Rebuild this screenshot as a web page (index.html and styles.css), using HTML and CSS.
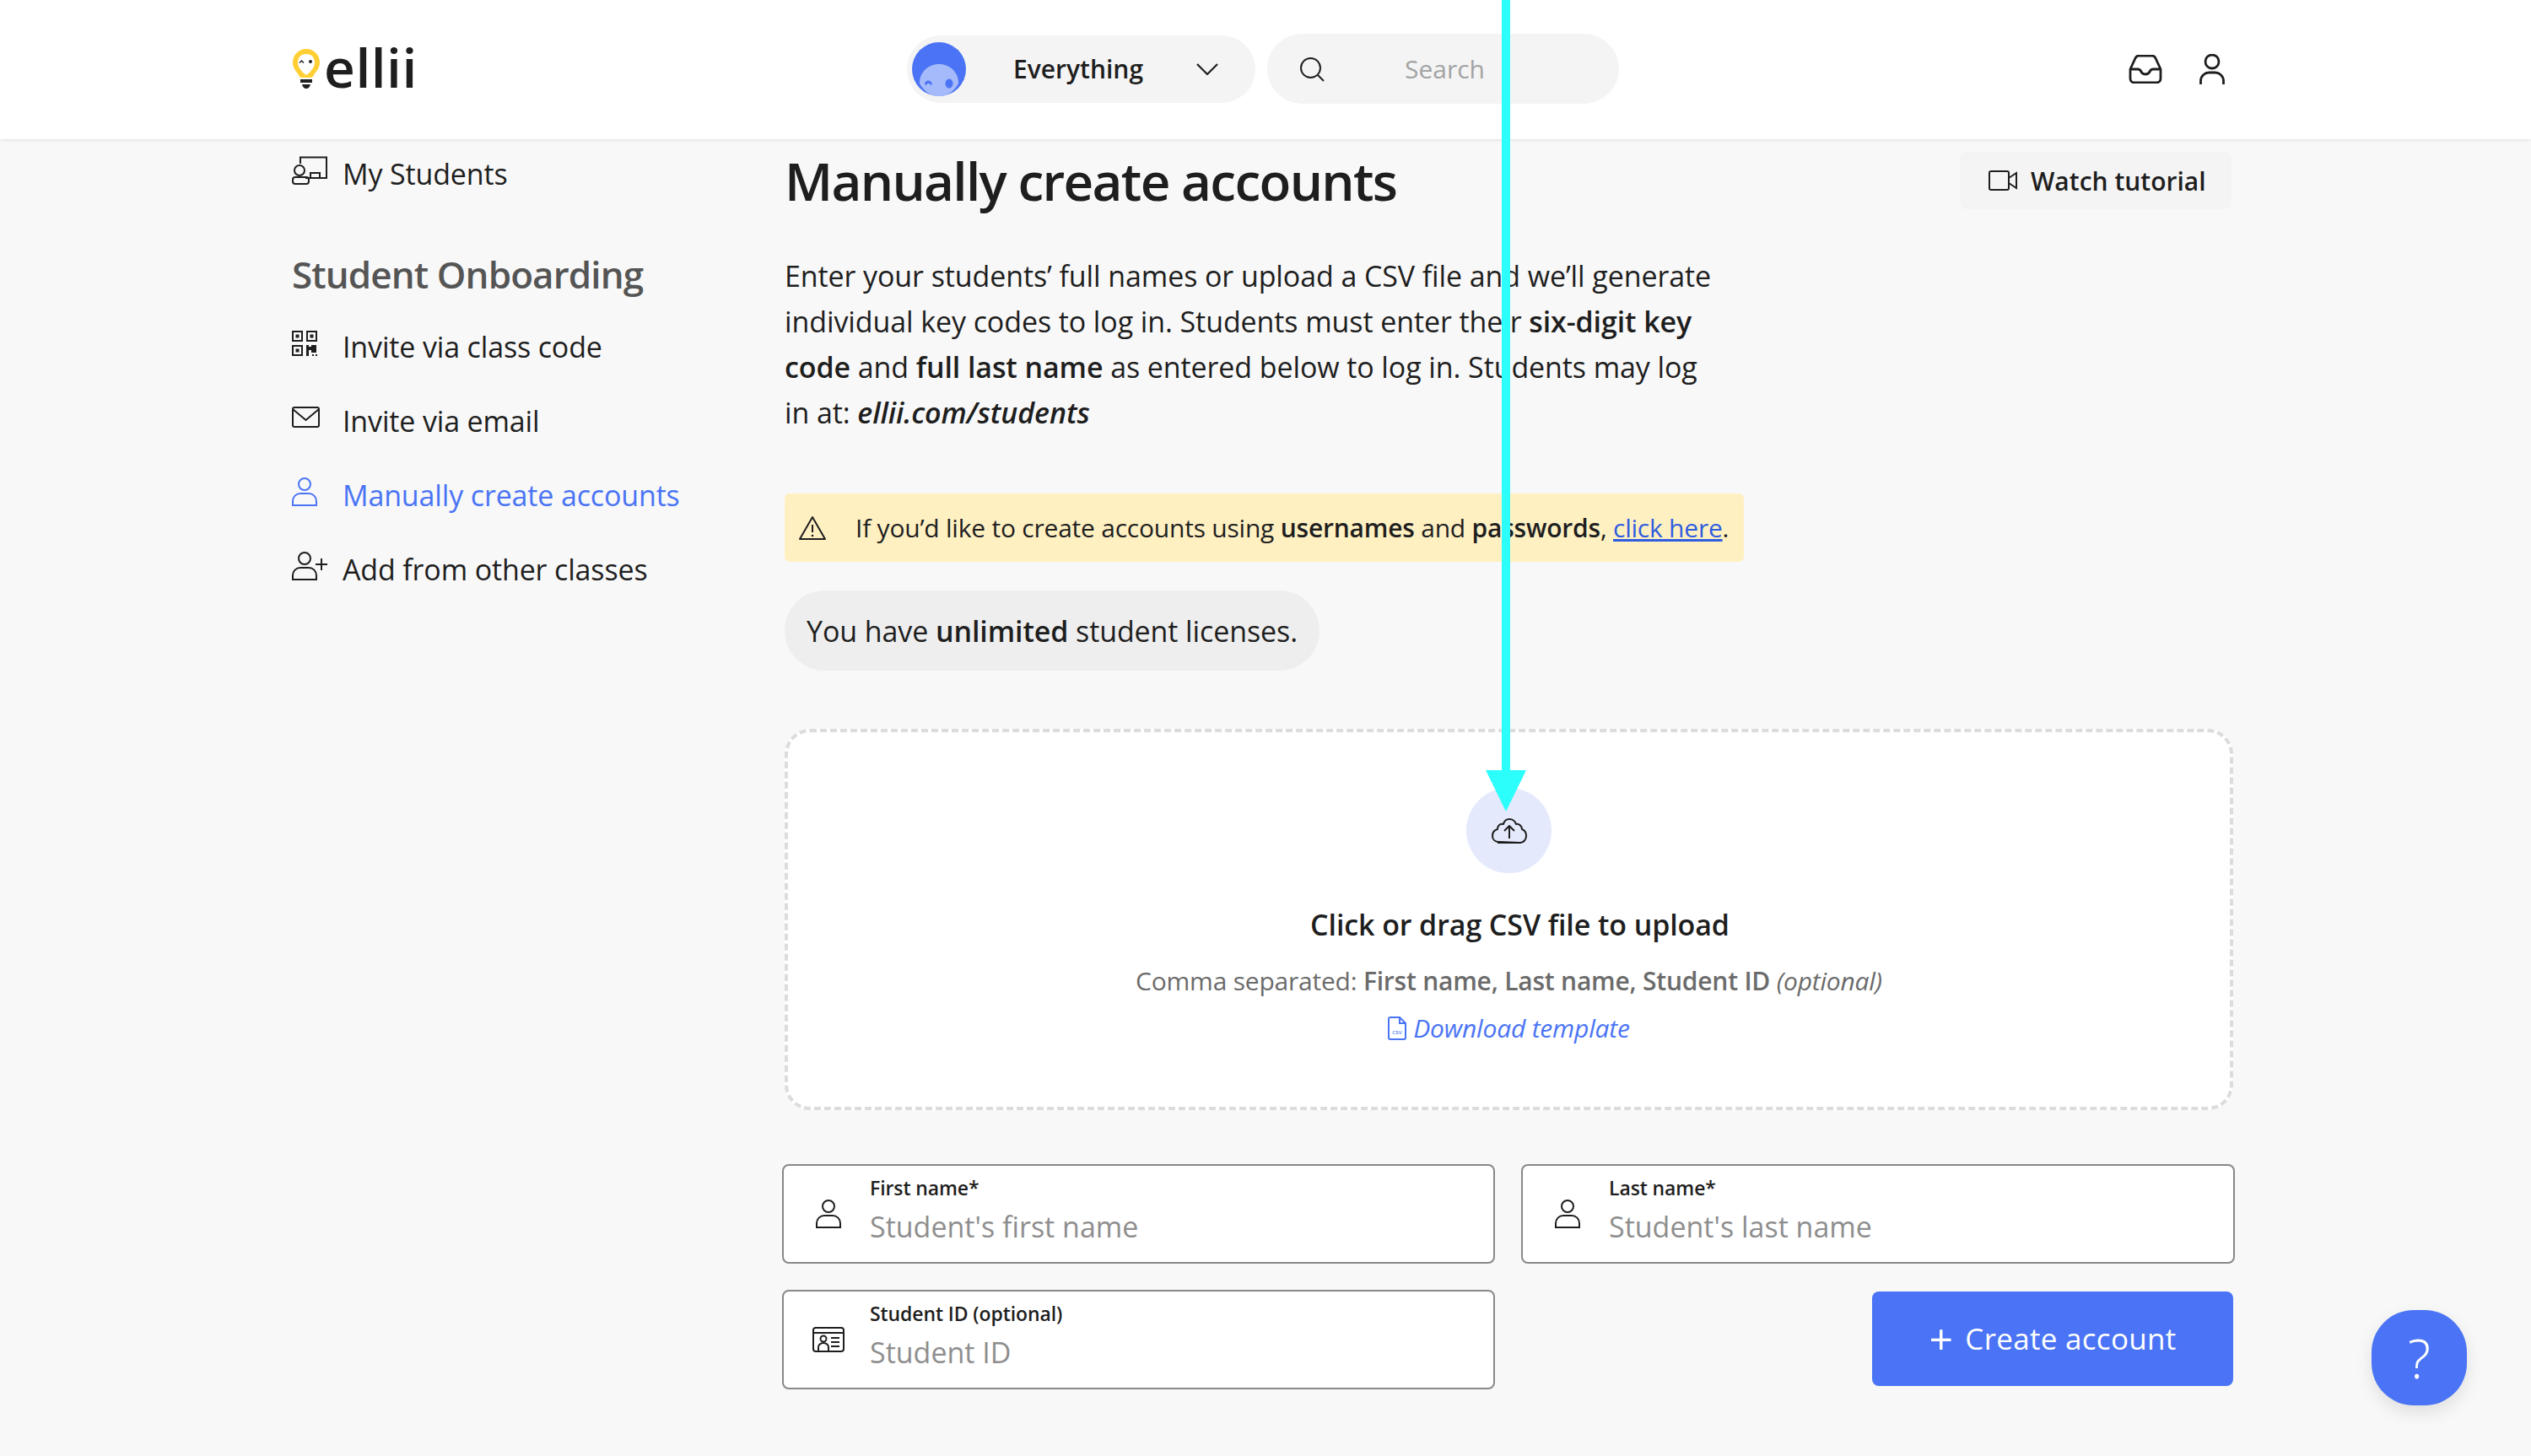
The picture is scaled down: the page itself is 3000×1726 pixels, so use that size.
FILE: index.html
```html
<!DOCTYPE html>
<html lang="en">
<head>
<meta charset="utf-8">
<title>Manually create accounts</title>
<link rel="stylesheet" href="styles.css">
</head>
<body>
<header class="topbar">
  <div class="logo">
    <svg class="bulb" viewBox="0 0 34 50" width="34" height="50">
      <path d="M17 1C8 1 1 8 1 17c0 7 4 10 7 15 1 2 2 3 3 3h12c1 0 2-1 3-3 3-5 7-8 7-15C33 8 26 1 17 1z" fill="#ffcf33"/>
      <path d="M17 7C11 7 7 11 7 17c0 5 3 8 6 12l4 3 4-3c3-4 6-7 6-12 0-6-4-10-10-10z" fill="#fff"/>
      <path d="M9 17.500l2.500-2.500 2.500 2.500" fill="none" stroke="#222" stroke-width="1.500"/>
      <circle cx="22" cy="16" r="2" fill="#222"/>
      <rect x="10" y="37" width="14" height="4" fill="#222"/>
      <path d="M12 43h10c-1 4-3 5-5 5s-4-1-5-5z" fill="#222"/>
    </svg>
    <span class="wordmark">ellii</span>
  </div>
  <div class="top-center">
    <div class="selector">
      <svg class="avatar" viewBox="0 0 64 64" width="64" height="64">
        <circle cx="32" cy="32" r="32" fill="#4a74f5"/>
        <path d="M32 26c13 0 23 10 23 22v1C50 58 42 64 32 64S14 58 9 49v-1c0-12 10-22 23-22z" fill="#a5bafa"/>
        <path d="M15 50c0-6 8-6 9 0l-2 1c-1-3-4-3-5 0z" fill="#4a74f5"/>
        <ellipse cx="44" cy="49" rx="4.500" ry="5.500" fill="#4a74f5"/>
      </svg>
      <span class="selector-label">Everything</span>
      <svg class="chevron" viewBox="0 0 26 14" width="26" height="14"><path d="M1 1l12 12L25 1" fill="none" stroke="#1e1e1e" stroke-width="2.200"/></svg>
    </div>
    <div class="search">
      <svg viewBox="0 0 30 30" width="30" height="30"><circle cx="13.500" cy="13.500" r="11.500" fill="none" stroke="#1e1e1e" stroke-width="2"/><path d="M22 22l7 7" stroke="#1e1e1e" stroke-width="2"/></svg>
      <span class="search-text">Search</span>
    </div>
  </div>
  <div class="top-actions">
    <svg viewBox="0 0 40 34" width="40" height="34"><path d="M2 17L8 4c1-2 2-3 4-3h16c2 0 3 1 4 3l6 13v11c0 3-2 5-5 5H7c-3 0-5-2-5-5z M2 17h9c2 0 3 1 4 3 1 2 3 3 5 3s4-1 5-3c1-2 2-3 4-3h9" fill="none" stroke="#1e1e1e" stroke-width="2.800" stroke-linejoin="round"/></svg>
    <svg viewBox="0 0 30 36" width="30" height="36"><circle cx="15" cy="9" r="8" fill="none" stroke="#1e1e1e" stroke-width="2.800"/><path d="M1.500 36v-4c0-6 5-10 10-10h7c5 0 10 4 10 10v4" fill="none" stroke="#1e1e1e" stroke-width="2.800"/></svg>
  </div>
</header>

<div class="page">
  <aside class="sidebar">
    <a class="nav-item nav-first">
      <svg viewBox="0 0 42 34" width="42" height="34"><g fill="none" stroke="#1e1e1e" stroke-width="2"><path d="M10 9V1.500h31V26H16"/><circle cx="9" cy="17" r="6"/><rect x="1" y="25" width="19" height="8" rx="3"/><path d="M22 26v-6h11v6"/></g></svg>
      <span>My Students</span>
    </a>
    <h2 class="side-title">Student Onboarding</h2>
    <a class="nav-item">
      <svg viewBox="0 0 30 30" width="30" height="30"><g fill="none" stroke="#1e1e1e" stroke-width="2"><rect x="1" y="1" width="11" height="11"/><rect x="18" y="1" width="11" height="11"/><rect x="1" y="18" width="11" height="11"/></g><g fill="#1e1e1e"><rect x="4.500" y="4.500" width="4" height="4"/><rect x="21.500" y="4.500" width="4" height="4"/><rect x="4.500" y="21.500" width="4" height="4"/><path d="M17 17h3v2h3v-2h6v9h-6v-3h-3v7h-3z"/><rect x="24" y="28" width="2" height="2"/><rect x="28" y="28" width="2" height="2"/></g></svg>
      <span>Invite via class code</span>
    </a>
    <a class="nav-item">
      <svg viewBox="0 0 33 26" width="33" height="26"><g fill="none" stroke="#1e1e1e" stroke-width="2"><rect x="1" y="1" width="31" height="23" rx="2"/><path d="M1 3l15.500 13L32 3"/></g></svg>
      <span>Invite via email</span>
    </a>
    <a class="nav-item active">
      <svg viewBox="0 0 30 34" width="30" height="34"><g fill="none" stroke="#4a74f5" stroke-width="2"><circle cx="15" cy="8" r="7"/><path d="M10 19h10c5 0 9 4 9 9v5H1v-5c0-5 4-9 9-9z"/></g></svg>
      <span>Manually create accounts</span>
    </a>
    <a class="nav-item">
      <svg viewBox="0 0 42 34" width="42" height="34"><g fill="none" stroke="#1e1e1e" stroke-width="2"><circle cx="15" cy="8" r="7"/><path d="M10 19h10c5 0 9 4 9 9v5H1v-5c0-5 4-9 9-9z"/><path d="M35 8v14M28 15h14"/></g></svg>
      <span>Add from other classes</span>
    </a>
  </aside>

  <main class="main">
    <div class="title-row">
      <h1>Manually create accounts</h1>
      <button class="tutorial">
        <svg viewBox="0 0 34 24" width="34" height="24"><g fill="none" stroke="#1e1e1e" stroke-width="2"><rect x="1" y="1" width="23" height="22" rx="2"/><path d="M24 9l9-6v18l-9-6"/></g></svg>
        <span>Watch tutorial</span>
      </button>
    </div>
    <p class="intro">Enter your students’ full names or upload a CSV file and we’ll generate individual key codes to log in. Students must enter their <b>six-digit key code</b> and <b>full last name</b> as entered below to log in. Students may log in at: <b><i>ellii.com/students</i></b></p>
    <div class="notice">
      <svg viewBox="0 0 34 30" width="34" height="30"><g fill="none" stroke="#1e1e1e" stroke-width="2" stroke-linejoin="round"><path d="M17 2L2 28h30z"/><path d="M17 11v9"/></g><circle cx="17" cy="24" r="1.300" fill="#1e1e1e"/></svg>
      <span>If you’d like to create accounts using <b>usernames</b> and <b>passwords</b>, <a class="notice-link">click here</a>.</span>
    </div>
    <div class="license"><span>You have <b>unlimited</b> student licenses.</span></div>
    <section class="dropzone">
      <div class="upload-circle">
        <svg viewBox="0 0 42 30" width="42" height="30"><g fill="none" stroke="#1e1e1e" stroke-width="2" stroke-linejoin="round"><path d="M9 28C4 28 1 25 1 21c0-4 2-7 6-8 0-5 4-7 7-6 1-4 4-6 7-6 4 0 7 3 8 6 3-1 7 2 7 6 3 1 5 4 5 8 0 4-3 8-7 8z"/><path d="M21 24V9M15 15l6-6 6 6"/></g><path d="M7 29h28" stroke="#1e1e1e" stroke-width="2"/></svg>
      </div>
      <div class="drop-title">Click or drag CSV file to upload</div>
      <div class="drop-sub">Comma separated: <b>First name, Last name, Student ID</b> <i>(optional)</i></div>
      <a class="drop-link">
        <svg viewBox="0 0 22 28" width="22" height="28"><path d="M1 3a2 2 0 0 1 2-2h11l7 7v17a2 2 0 0 1-2 2H3a2 2 0 0 1-2-2z M14 1v7h7" fill="none" stroke="#4a74f5" stroke-width="2"/><text class="csv-mark" x="11" y="21" text-anchor="middle">csv</text></svg>
        <i>Download template</i>
      </a>
    </section>
    <div class="form">
      <label class="field">
        <svg viewBox="0 0 30 34" width="30" height="34"><g fill="none" stroke="#1e1e1e" stroke-width="2"><circle cx="15" cy="8" r="7"/><path d="M10 19h10c5 0 9 4 9 9v5H1v-5c0-5 4-9 9-9z"/></g></svg>
        <span class="field-text"><span class="field-label">First name*</span><span class="field-ph">Student's first name</span></span>
      </label>
      <label class="field">
        <svg viewBox="0 0 30 34" width="30" height="34"><g fill="none" stroke="#1e1e1e" stroke-width="2"><circle cx="15" cy="8" r="7"/><path d="M10 19h10c5 0 9 4 9 9v5H1v-5c0-5 4-9 9-9z"/></g></svg>
        <span class="field-text"><span class="field-label">Last name*</span><span class="field-ph">Student's last name</span></span>
      </label>
      <label class="field">
        <svg viewBox="0 0 38 30" width="38" height="30"><g fill="none" stroke="#1e1e1e" stroke-width="2"><rect x="1" y="1" width="36" height="28" rx="3"/><path d="M1 7h36"/><circle cx="13" cy="14" r="3.500"/><path d="M7 28v-4c0-3 3-5 6-5s6 2 6 5v4"/><path d="M22 13h10M22 18h10M22 23h10"/></g></svg>
        <span class="field-text"><span class="field-label">Student ID (optional)</span><span class="field-ph">Student ID</span></span>
      </label>
      <div class="form-action">
        <button class="create"><span class="plus">+</span><span>Create account</span></button>
      </div>
    </div>
  </main>
</div>

<div class="help">?</div>

<svg class="annotation" viewBox="0 0 48 962" width="48" height="962">
  <rect x="19" y="0" width="10" height="915" fill="#2cfffb"/>
  <path d="M0 913h48L24 962z" fill="#2cfffb"/>
</svg>
</body>
</html>
```
FILE: styles.css
```css
* { box-sizing: border-box; }
html, body { margin: 0; padding: 0; }
body {
  width: 3000px;
  height: 1726px;
  overflow: hidden;
  position: relative;
  background: #f8f8f8;
  color: #1e1e1e;
  font-family: "Open Sans", "Liberation Sans", sans-serif;
}
b { font-weight: 600; }

.topbar {
  height: 165px;
  background: #fff;
  box-shadow: 0 1px 4px rgba(0,0,0,.1);
  display: flex;
  align-items: center;
  padding: 0 363px 2px 346px;
  position: relative;
}
.logo { display: flex; align-items: center; width: 729px; gap: 4px; }
.bulb { flex: none; }
.wordmark { font-size: 64px; font-weight: 600; line-height: 50px; margin-top: -4px; letter-spacing: 0.5px; }
.top-center { display: flex; align-items: center; gap: 14px; flex: 1; }
.selector {
  width: 413px; height: 80px; border-radius: 40px; background: #f4f4f4;
  display: flex; align-items: center; padding-left: 6px;
}
.selector-label { font-size: 30px; font-weight: 600; margin-left: 56px; width: 217px; }
.search {
  width: 417px; height: 83px; border-radius: 42px; background: #f4f4f4;
  display: flex; align-items: center; padding-left: 38px;
}
.search-text { font-size: 30px; color: #a3a3a3; margin-left: 95px; }
.top-actions { display: flex; align-items: center; gap: 44px; }

.page { display: flex; padding: 20px 350px 0 346px; }
.sidebar { width: 584px; flex: none; }
.nav-item {
  display: grid; grid-template-columns: 60px auto; align-items: center;
  height: 88px; font-size: 34px; letter-spacing: -0.15px;
}
.nav-item svg { margin-top: -8px; }
.nav-first { height: 44px; margin-top: -2px; }
.side-title { margin: 68px 0 12px; font-size: 44px; font-weight: 600; color: #555; line-height: 60px; letter-spacing: -0.9px; }
.active { color: #4a74f5; }

.main { flex: 1; min-width: 0; }
.title-row { display: flex; justify-content: space-between; align-items: center; height: 68px; margin-top: -5px; }
h1 { margin: 0; font-size: 62px; font-weight: 600; line-height: 68px; letter-spacing: -1.7px; }
.tutorial {
  border: 0; background: #f4f4f4; border-radius: 8px; height: 68px; width: 322px; margin-right: 5px;
  display: flex; align-items: center; gap: 16px; padding: 0 0 0 34px;
  font: 600 30px "Open Sans", sans-serif; color: #1e1e1e;
}
.intro { width: 1110px; margin: 52px 0 0; font-size: 34px; line-height: 54px; letter-spacing: -0.1px; }
.notice {
  width: 1137px; height: 81px; margin-top: 69px; border-radius: 6px; background: #fff0c2;
  display: flex; align-items: center; gap: 34px; padding-left: 16px; font-size: 30px; letter-spacing: -0.22px;
}
.notice-link { color: #2f5de0; text-decoration: underline; }
.license {
  display: flex; align-items: center; width: fit-content; height: 95px; margin-top: 34px; padding: 0 26px;
  border-radius: 48px; background: #eee; font-size: 34px; letter-spacing: -0.1px;
}
.dropzone {
  display: flex; flex-direction: column; align-items: center;
  width: 1717px; height: 452px; margin-top: 69px;
  border: 4px dashed #dcdcdc; border-radius: 30px; background: #fff;
  padding-top: 66px;
}
.upload-circle {
  width: 101px; height: 101px; border-radius: 50%; background: #e4e9fc;
  display: flex; align-items: center; justify-content: center;
}
.drop-title { font-size: 34px; font-weight: 600; margin: 38px 0 0 26px; line-height: 46px; letter-spacing: -0.1px; }
.drop-sub { font-size: 30px; color: #6b6b6b; margin-top: 23px; line-height: 42px; letter-spacing: -0.22px; }
.drop-link { display: flex; align-items: center; gap: 8px; font-size: 30px; color: #4a74f5; margin-top: 14px; line-height: 42px; letter-spacing: -0.2px; }
.csv-mark { font-size: 8px; fill: #4a74f5; letter-spacing: 0; }
.form {
  display: grid; grid-template-columns: 845px 846px; column-gap: 31px; row-gap: 31px;
  margin: 64px 0 0 -3px;
}
.field {
  height: 118px; border: 2px solid #888; border-radius: 8px; background: #fff;
  display: flex; align-items: center; padding-left: 34px;
}
.field svg { flex: none; width: 38px; }
.field-text { display: flex; flex-direction: column; margin: -6px 0 0 30px; }
.field-label { font-size: 23px; font-weight: 600; line-height: 30px; letter-spacing: -0.1px; }
.field-ph { font-size: 34px; color: #8e8e8e; line-height: 50px; margin-top: 6px; }
.form-action { display: flex; justify-content: flex-end; align-items: center; }
.create {
  width: 428px; height: 112px; margin: -3px 2px 0 0; border: 0; border-radius: 8px; background: #4a74f5; color: #fff;
  display: flex; align-items: center; justify-content: center; gap: 14px;
  font: 400 35px "Open Sans", sans-serif; letter-spacing: 0.3px;
}
.plus { font-size: 50px; line-height: 44px; }
.help {
  position: absolute; left: 2811px; top: 1553px; width: 113px; height: 113px; border-radius: 50px;
  background: #4a74f5; color: #fff; font-size: 64px; font-weight: 300;
  display: flex; align-items: center; justify-content: center;
  box-shadow: 0 8px 20px rgba(0,0,0,.1);
}
.annotation { position: absolute; left: 1761px; top: 0; }
```
